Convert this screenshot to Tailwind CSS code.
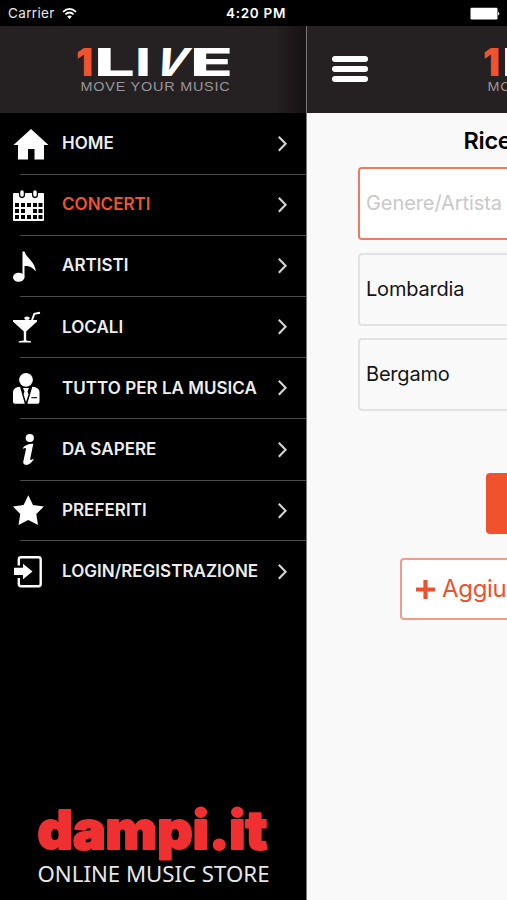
<!DOCTYPE html>
<html lang="it">
<head>
<meta charset="utf-8">
<title>1LIVE</title>
<script src="https://cdn.jsdelivr.net/npm/@tailwindcss/browser@4"></script>
</head>
<body class="w-[507px] h-[900px] overflow-hidden bg-black text-white font-['Inter',sans-serif] flex flex-col">
<svg class="hidden">
  <symbol id="chev" viewBox="0 0 12 18"><path d="M1.800 1.800 8.600 8.800 1.800 15.800" fill="none" stroke="#d4d4d4" stroke-width="2.100"/></symbol>
  <symbol id="logo" viewBox="0 0 160 50">
    <g font-family="Inter" font-weight="800" font-size="38.500" fill="#fff">
      <text x="0" y="34" font-weight="900" fill="#f1532f" textLength="17" lengthAdjust="spacingAndGlyphs">1</text>
      <text x="18" y="34" textLength="41" lengthAdjust="spacingAndGlyphs">L</text>
      <text x="59.500" y="34" textLength="15" lengthAdjust="spacingAndGlyphs">I</text>
      <text transform="translate(75 34) skewX(-22)" x="0" y="0" textLength="31" lengthAdjust="spacingAndGlyphs">V</text>
      <text x="114" y="34" textLength="43" lengthAdjust="spacingAndGlyphs">E</text>
    </g>
    <text x="4.500" y="48.500" font-family="Liberation Sans" font-size="12.800" fill="#98969a" letter-spacing="0.700" textLength="150" lengthAdjust="spacingAndGlyphs">MOVE YOUR MUSIC</text>
  </symbol>
</svg>
<header class="h-[26px] shrink-0 flex items-center text-[13.500px]">
  <span class="ml-2 w-[48px] tracking-[0.350px] text-[#e8e8e8] mt-px">Carrier</span>
  <svg class="ml-[6px]" width="15" height="13" viewBox="0 0 16 14" fill="none" stroke="#fff" stroke-width="2"><path d="M1 5.200Q8-1.200 15 5.200M3.600 8Q8 3.900 12.400 8"/><path d="M8 13 5.500 10.200Q8 8.200 10.500 10.200Z" fill="#fff" stroke="none"/></svg>
  <span class="ml-[149px] font-semibold tracking-[0.700px] w-[64px] whitespace-nowrap mt-px">4:20 PM</span>
  <svg class="ml-[180px]" width="32" height="13" viewBox="0 0 32 13" fill="#fff"><rect x="0.500" y="0.800" width="27" height="11.700" rx="1.200"/><path d="M28.200 4.500Q30.500 6.600 28.200 8.700Z"/></svg>
</header>
<div class="flex flex-1 min-h-0">
  <aside class="w-[306px] shrink-0 flex flex-col">
    <div class="h-[87px] shrink-0 bg-linear-to-r from-[#252122] from-90% to-[#151213] pt-[16px] pl-[76px]">
      <svg width="160" height="50"><use href="#logo"/></svg>
    </div>
    <nav class="flex flex-col text-[17px] font-semibold tracking-[0.030px] text-[#ededed] pt-[0.500px]">
      <div class="h-[61.100px] flex items-center relative">
        <svg class="w-[62px] h-[61px]" viewBox="0 0 62 61" fill="#fff"><path d="M31 15 48.500 31H44V45.500H34.500V35H28V45.500H18V31H13.500Z"/></svg>
        <span class="w-[212px] whitespace-nowrap">HOME</span><svg class="ml-[3px] w-3 h-[18px]"><use href="#chev"/></svg>
        <i class="absolute left-5 right-0 bottom-[-0.500px] h-px bg-[#4b4b4b]"></i>
      </div>
      <div class="h-[61.100px] flex items-center relative">
        <svg class="w-[62px] h-[61px]" viewBox="0 0 62 61"><rect x="13" y="18" width="31" height="28" rx="1" fill="#fff"/><path fill="#000" d="M15 28h4v4h-4zM21 28h4v4h-4zM27 28h4v4h-4zM33 28h4v4h-4zM38.500 28h4v4h-4zM15 34h4v4h-4zM21 34h4v4h-4zM33 34h4v4h-4zM38.500 34h4v4h-4zM15 40h4v4h-4zM21 40h4v4h-4zM27 40h4v4h-4zM33 40h4v4h-4zM38.500 40h4v4h-4z"/><g fill="#fff" stroke="#000" stroke-width="1.300"><rect x="19.600" y="14.500" width="4.800" height="8" rx="2.400"/><rect x="32.600" y="14.500" width="4.800" height="8" rx="2.400"/></g></svg>
        <span class="w-[212px] whitespace-nowrap text-[#f1532f]">CONCERTI</span><svg class="ml-[3px] w-3 h-[18px]"><use href="#chev"/></svg>
        <i class="absolute left-5 right-0 bottom-[-0.500px] h-px bg-[#4b4b4b]"></i>
      </div>
      <div class="h-[61.100px] flex items-center relative">
        <svg class="w-[62px] h-[61px]" viewBox="0 0 62 61" fill="#fff"><ellipse cx="18.700" cy="41.200" rx="5.700" ry="4.500"/><path d="M22.500 15.500H24.500C27 23 34 24 36 35.500C32 30.500 28 29.500 24.500 30V41.500H22.500Z"/></svg>
        <span class="w-[212px] whitespace-nowrap">ARTISTI</span><svg class="ml-[3px] w-3 h-[18px]"><use href="#chev"/></svg>
        <i class="absolute left-5 right-0 bottom-[-0.500px] h-px bg-[#4b4b4b]"></i>
      </div>
      <div class="h-[61.100px] flex items-center relative">
        <svg class="w-[62px] h-[61px]" viewBox="0 0 62 61" fill="#fff"><path d="M13 23H37V24.500L26.200 34.500V43.500L31 44.300V45.500H18.700V44.300L23.800 43.500V34.500L13 24.500Z"/><ellipse cx="27" cy="21.200" rx="2.800" ry="1.800"/><path d="M32 23 34.300 16.800 40 15.800" fill="none" stroke="#fff" stroke-width="2"/></svg>
        <span class="w-[212px] whitespace-nowrap">LOCALI</span><svg class="ml-[3px] w-3 h-[18px]"><use href="#chev"/></svg>
        <i class="absolute left-5 right-0 bottom-[-0.500px] h-px bg-[#4b4b4b]"></i>
      </div>
      <div class="h-[61.100px] flex items-center relative">
        <svg class="w-[62px] h-[61px]" viewBox="0 0 62 61" fill="#fff"><circle cx="26" cy="21.800" r="6.900"/><path d="M13 34Q13 29.500 20 28.800L24.800 45.800H15Q13 45.800 13 43.500ZM32.300 28.800Q39.500 29.500 39.500 34V43.500Q39.500 45.800 37.500 45.800H27.300ZM23 30H29L27.500 33.500 28.500 36.500 26 44 23.600 36.500 24.500 33.500Z"/><path d="M31.300 39.700H37" stroke="#000" stroke-width="1.100"/></svg>
        <span class="w-[212px] whitespace-nowrap">TUTTO PER LA MUSICA</span><svg class="ml-[3px] w-3 h-[18px]"><use href="#chev"/></svg>
        <i class="absolute left-5 right-0 bottom-[-0.500px] h-px bg-[#4b4b4b]"></i>
      </div>
      <div class="h-[61.100px] flex items-center relative">
        <svg class="w-[62px] h-[61px]" viewBox="0 0 62 61" fill="#fff"><circle cx="29.800" cy="19" r="4.100"/><path d="M23.200 28.500Q27 24.500 33.300 24.800L30.200 40Q30 42 34 39.500Q31 45.900 26 45.900Q22.700 45.500 23.300 42.500L26 30Q25.800 28.200 23.200 30Z"/></svg>
        <span class="w-[212px] whitespace-nowrap">DA SAPERE</span><svg class="ml-[3px] w-3 h-[18px]"><use href="#chev"/></svg>
        <i class="absolute left-5 right-0 bottom-[-0.500px] h-px bg-[#4b4b4b]"></i>
      </div>
      <div class="h-[61.100px] flex items-center relative">
        <svg class="w-[62px] h-[61px]" viewBox="0 0 62 61" fill="#fff"><path d="M28.300 15.200 33 25 43.800 26.600 36.300 34 38 45 28.300 40 18.500 45 20.300 34 13 26.600 23.600 25Z"/></svg>
        <span class="w-[212px] whitespace-nowrap">PREFERITI</span><svg class="ml-[3px] w-3 h-[18px]"><use href="#chev"/></svg>
        <i class="absolute left-5 right-0 bottom-0 h-px bg-[#4b4b4b]"></i>
      </div>
      <div class="h-[61.100px] flex items-center">
        <svg class="w-[62px] h-[61px]" viewBox="0 0 62 61" fill="#fff"><path d="M18.800 24.500V18.500Q18.800 16.300 21 16.300H38.500Q40.700 16.300 40.700 18.500V43Q40.700 45.200 38.500 45.200H21Q18.800 45.200 18.800 43V37" fill="none" stroke="#fff" stroke-width="2.400"/><path d="M14 26.800H23V22.700L32.500 30.400 23 38.200V34H14Z"/></svg>
        <span class="w-[212px] whitespace-nowrap">LOGIN/REGISTRAZIONE</span><svg class="ml-[3px] w-3 h-[18px]"><use href="#chev"/></svg>
      </div>
    </nav>
    <div class="mt-auto pl-[36px] h-[104px] shrink-0">
      <svg width="240" height="92" viewBox="0 0 240 92">
        <text x="1.500" y="52.500" font-family="Inter" font-weight="900" font-size="53" fill="#f03030" stroke="#f03030" stroke-width="2" stroke-linejoin="round" textLength="230" lengthAdjust="spacingAndGlyphs">dampi.it</text>
        <text x="1.500" y="86" font-family="Noto Sans, Open Sans" font-size="21.500" fill="#e6e6e6" textLength="232" lengthAdjust="spacingAndGlyphs">ONLINE MUSIC STORE</text>
      </svg>
    </div>
  </aside>
  <main class="w-[201px] shrink-0 bg-[#f9f9f9] text-black overflow-hidden border-l border-[#777] flex flex-col">
    <div class="h-[87px] shrink-0 bg-[#252122] flex -ml-px border-l border-black">
      <div class="flex flex-col gap-[4px] ml-[25px] mt-[30px] w-[36px] shrink-0">
        <i class="h-[6px] rounded-full bg-white"></i><i class="h-[6px] rounded-full bg-white"></i><i class="h-[6px] rounded-full bg-white"></i>
      </div>
      <svg class="ml-[114.500px] mt-[16px] shrink-0" width="160" height="50"><use href="#logo"/></svg>
    </div>
    <h1 class="ml-[156.500px] mt-[13px] h-[30px] leading-[30px] text-[23.500px] font-semibold tracking-[-0.300px] whitespace-nowrap">Rice</h1>
    <div class="ml-[51px] mt-[11px] w-[300px] h-[73px] shrink-0 rounded-[4px] border-2 border-[#f07a60] bg-white pl-[6px] pb-px flex items-center text-[20px] tracking-[-0.080px] text-[#c9c9c9]">Genere/Artista</div>
    <div class="ml-[51px] mt-[13px] w-[300px] h-[73px] shrink-0 rounded-[4px] border-2 border-[#e2e2e2] pl-[6px] pb-[2px] flex items-center text-[20px] tracking-[-0.200px] text-[#151515]">Lombardia</div>
    <div class="ml-[51px] mt-[12px] w-[300px] h-[73px] shrink-0 rounded-[4px] border-2 border-[#e2e2e2] pl-[6px] pb-px flex items-center text-[20px] tracking-[-0.200px] text-[#151515]">Bergamo</div>
    <div class="ml-[179px] mt-[62px] w-[200px] h-[61px] shrink-0 rounded-[4px] bg-[#f0522d]"></div>
    <div class="ml-[93px] mt-[24px] w-[300px] h-[62px] shrink-0 rounded-[4px] border-2 border-[#f39b88] bg-white flex items-center pl-[14px] text-[24px] tracking-[-0.300px] text-[#ed512d]">
      <svg class="mr-[7px] shrink-0" width="19" height="19"><path d="M0 9.500H19M9.500 0V19" stroke="#ed512d" stroke-width="4.200"/></svg>Aggiu
    </div>
  </main>
</div>
</body>
</html>
